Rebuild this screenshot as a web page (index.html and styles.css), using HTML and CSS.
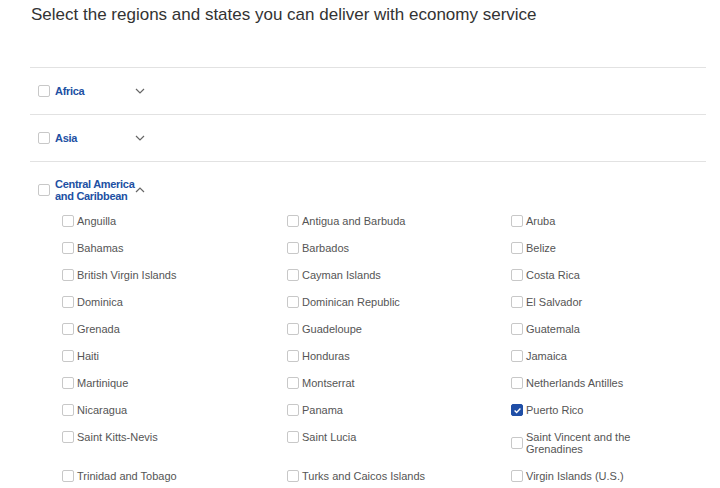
FILE: index.html
```html
<!DOCTYPE html>
<html>
<head>
<meta charset="utf-8">
<link rel="stylesheet" href="styles.css">
</head>
<body>
<div class="page">
  <h1 class="title">Select the regions and states you can deliver with economy service</h1>
  <div class="regions">
    <div class="region">
      <div class="region-head">
        <span class="box"></span>
        <span class="region-label">Africa</span>
        <svg class="chev" width="10" height="6" viewBox="0 0 10 6"><path d="M1 1 L5 5 L9 1" fill="none" stroke="#666" stroke-width="1.2"/></svg>
      </div>
    </div>
    <div class="region">
      <div class="region-head">
        <span class="box"></span>
        <span class="region-label">Asia</span>
        <svg class="chev" width="10" height="6" viewBox="0 0 10 6"><path d="M1 1 L5 5 L9 1" fill="none" stroke="#666" stroke-width="1.2"/></svg>
      </div>
    </div>
    <div class="region open">
      <div class="region-head">
        <span class="box"></span>
        <span class="region-label">Central America and Caribbean</span>
        <svg class="chev" width="10" height="6" viewBox="0 0 10 6"><path d="M1 5 L5 1 L9 5" fill="none" stroke="#666" stroke-width="1.2"/></svg>
      </div>
      <div class="items">
        <label class="item"><span class="box"></span><span class="item-label">Anguilla</span></label>
        <label class="item"><span class="box"></span><span class="item-label">Antigua and Barbuda</span></label>
        <label class="item"><span class="box"></span><span class="item-label">Aruba</span></label>
        <label class="item"><span class="box"></span><span class="item-label">Bahamas</span></label>
        <label class="item"><span class="box"></span><span class="item-label">Barbados</span></label>
        <label class="item"><span class="box"></span><span class="item-label">Belize</span></label>
        <label class="item"><span class="box"></span><span class="item-label">British Virgin Islands</span></label>
        <label class="item"><span class="box"></span><span class="item-label">Cayman Islands</span></label>
        <label class="item"><span class="box"></span><span class="item-label">Costa Rica</span></label>
        <label class="item"><span class="box"></span><span class="item-label">Dominica</span></label>
        <label class="item"><span class="box"></span><span class="item-label">Dominican Republic</span></label>
        <label class="item"><span class="box"></span><span class="item-label">El Salvador</span></label>
        <label class="item"><span class="box"></span><span class="item-label">Grenada</span></label>
        <label class="item"><span class="box"></span><span class="item-label">Guadeloupe</span></label>
        <label class="item"><span class="box"></span><span class="item-label">Guatemala</span></label>
        <label class="item"><span class="box"></span><span class="item-label">Haiti</span></label>
        <label class="item"><span class="box"></span><span class="item-label">Honduras</span></label>
        <label class="item"><span class="box"></span><span class="item-label">Jamaica</span></label>
        <label class="item"><span class="box"></span><span class="item-label">Martinique</span></label>
        <label class="item"><span class="box"></span><span class="item-label">Montserrat</span></label>
        <label class="item"><span class="box"></span><span class="item-label">Netherlands Antilles</span></label>
        <label class="item"><span class="box"></span><span class="item-label">Nicaragua</span></label>
        <label class="item"><span class="box"></span><span class="item-label">Panama</span></label>
        <label class="item"><span class="box checked"><svg width="9" height="9" viewBox="0 0 9 9"><path d="M1.6 4.6 L3.6 6.5 L7.4 2.5" fill="none" stroke="#fff" stroke-width="1.4"/></svg></span><span class="item-label">Puerto Rico</span></label>
        <label class="item"><span class="box"></span><span class="item-label">Saint Kitts-Nevis</span></label>
        <label class="item"><span class="box"></span><span class="item-label">Saint Lucia</span></label>
        <label class="item"><span class="box"></span><span class="item-label">Saint Vincent and the Grenadines</span></label>
        <label class="item"><span class="box"></span><span class="item-label">Trinidad and Tobago</span></label>
        <label class="item"><span class="box"></span><span class="item-label">Turks and Caicos Islands</span></label>
        <label class="item"><span class="box"></span><span class="item-label">Virgin Islands (U.S.)</span></label>
      </div>
    </div>
  </div>
</div>
</body>
</html>
```

FILE: styles.css
```css
html, body {
  margin: 0;
  padding: 0;
  background: #fff;
}
body {
  font-family: "Liberation Sans", Arial, sans-serif;
  color: #555;
}
.page {
  padding: 5px 14px 0 30px;
}
.title {
  margin: 0 0 0 1px;
  font-size: 17px;
  font-weight: normal;
  line-height: 20px;
  color: #333;
  height: 62px;
}
.region {
  border-top: 1px solid #e2e2e2;
}
.region-head {
  display: flex;
  align-items: center;
  height: 46px;
  padding-left: 8px;
}
.open .region-head {
  height: 53px;
  padding-top: 3px;
  box-sizing: border-box;
}
.box {
  flex: none;
  width: 10px;
  height: 10px;
  border: 1px solid #c8c8c8;
  border-radius: 2px;
  background: #fff;
  display: flex;
  align-items: center;
  justify-content: center;
}
.box.checked {
  background: #1f4ea6;
  border-color: #1f4ea6;
}
.region-label {
  margin-left: 5px;
  width: 80px;
  font-size: 11px;
  font-weight: bold;
  line-height: 12px;
  letter-spacing: -0.3px;
  color: #2150a3;
}
.chev {
  display: block;
  margin-left: 0;
}
.items {
  display: grid;
  grid-template-columns: 225px 224px 1fr;
  align-items: start;
  row-gap: 15px;
  padding-left: 32px;
  padding-bottom: 20px;
}
.item {
  display: flex;
  align-items: center;
  gap: 3px;
  font-size: 11px;
  line-height: 12px;
  color: #555;
}
.item-label {
  max-width: 130px;
}
```
